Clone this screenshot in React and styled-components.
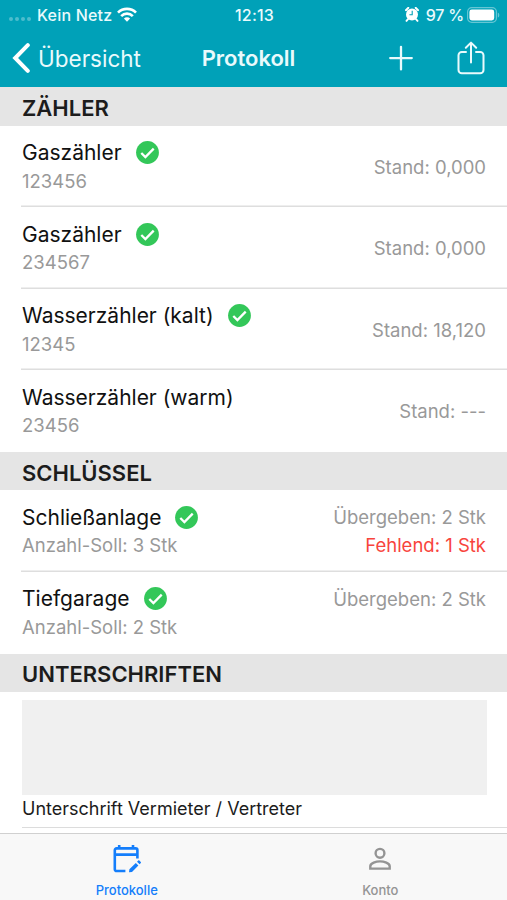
import styled, { createGlobalStyle } from "styled-components";

const meters = [
  { name: "Gaszähler", info: "123456", done: true, values: ["Stand: 0,000"] },
  { name: "Gaszähler", info: "234567", done: true, values: ["Stand: 0,000"] },
  { name: "Wasserzähler (kalt)", info: "12345", done: true, values: ["Stand: 18,120"] },
  { name: "Wasserzähler (warm)", info: "23456", done: false, values: ["Stand: ---"] },
];

const keys = [
  { name: "Schließanlage", info: "Anzahl-Soll: 3 Stk", done: true, values: ["Übergeben: 2 Stk"], missing: "Fehlend: 1 Stk" },
  { name: "Tiefgarage", info: "Anzahl-Soll: 2 Stk", done: true, values: ["Übergeben: 2 Stk"] },
];

export default function App() {
  return (
    <Screen>
      <GlobalStyle />
      <StatusBar>
        <StatusLeft>
          <SignalDots>
            <i />
            <i />
            <i />
            <i />
          </SignalDots>
          <Carrier>Kein Netz</Carrier>
          <WifiIcon />
        </StatusLeft>
        <Clock>12:13</Clock>
        <StatusRight>
          <AlarmIcon />
          <Percent>97 %</Percent>
          <BatteryIcon />
        </StatusRight>
      </StatusBar>
      <NavBar>
        <BackButton>
          <svg width="18" height="30" viewBox="0 0 18 30" fill="none" stroke="currentColor" strokeWidth="4">
            <path d="M15.8 2.2 3.2 15 15.8 27.8" strokeLinecap="round" strokeLinejoin="miter" />
          </svg>
          <span>Übersicht</span>
        </BackButton>
        <NavTitle>Protokoll</NavTitle>
        <NavActions>
          <ActionButton aria-label="Hinzufügen">
            <svg width="24" height="26" viewBox="0 0 24 26" stroke="currentColor" strokeWidth="2.3" strokeLinecap="round">
              <path d="M12 1.8v22.6M1.2 13.1h21.6" />
            </svg>
          </ActionButton>
          <ActionButton aria-label="Teilen">
            <svg width="28" height="34" viewBox="0 0 28 34" fill="none" stroke="currentColor" strokeWidth="2" strokeLinecap="round" strokeLinejoin="round">
              <path d="M9 11H4.8A3.3 3.3 0 0 0 1.5 14.3v14.6a3.3 3.3 0 0 0 3.3 3.3h18.4a3.3 3.3 0 0 0 3.3-3.3V14.3a3.3 3.3 0 0 0-3.3-3.3H19" />
              <path d="M14 21.5V1.8M8.8 6.8 14 1.6l5.2 5.2" />
            </svg>
          </ActionButton>
        </NavActions>
      </NavBar>

      <Content>
        <SectionHeader>ZÄHLER</SectionHeader>
        <List items={meters} />
        <SectionHeader>SCHLÜSSEL</SectionHeader>
        <List items={keys} top />
        <SectionHeader>UNTERSCHRIFTEN</SectionHeader>
        <Signature>
          <SignatureField />
          <SignatureLabel>Unterschrift Vermieter / Vertreter</SignatureLabel>
        </Signature>
      </Content>

      <TabBar>
        <Tab $active>
          <CalendarEditIcon />
          <TabLabel>Protokolle</TabLabel>
        </Tab>
        <Tab>
          <PersonIcon />
          <TabLabel>Konto</TabLabel>
        </Tab>
      </TabBar>
    </Screen>
  );
}

function List({ items, top }) {
  return (
    <Rows>
      {items.map((item) => (
        <Row key={item.info}>
          <div>
            <RowTitle>
              {item.name}
              {item.done && <CheckIcon />}
            </RowTitle>
            <RowInfo>{item.info}</RowInfo>
          </div>
          <RowValues $top={top}>
            {item.values.map((value) => (
              <RowValue key={value}>{value}</RowValue>
            ))}
            {item.missing && <RowValue $missing>{item.missing}</RowValue>}
          </RowValues>
        </Row>
      ))}
    </Rows>
  );
}

function CheckIcon() {
  return (
    <svg width="23" height="23" viewBox="0 0 23 23" fill="none">
      <circle cx="11.5" cy="11.5" r="11.4" fill="#33c759" />
      <path d="m5.3 12 4.1 4.1 8.3-8.5" stroke="#fff" strokeWidth="2.3" />
    </svg>
  );
}

function WifiIcon() {
  return (
    <svg width="20" height="15" viewBox="0 0 20 15" fill="none" stroke="#fff" strokeWidth="2.7">
      <path d="M1 5.6a12.8 12.8 0 0 1 18 0" />
      <path d="M4.2 9.1a8.2 8.2 0 0 1 11.6 0" />
      <path d="M10 14.8 6.9 11.6a4.4 4.4 0 0 1 6.2 0z" fill="#fff" stroke="none" />
    </svg>
  );
}

function AlarmIcon() {
  return (
    <svg width="14" height="15" viewBox="0 0 14 15">
      <circle cx="7" cy="7.4" r="6" fill="#fff" />
      <path d="m.9 3.2 2.5-2.4M13.1 3.2l-2.5-2.4M3 12.2l-1.5 1.7M11 12.2l1.5 1.7" stroke="#fff" strokeWidth="1.9" strokeLinecap="round" />
      <path d="M7.2 3.8v4H4.4" fill="none" stroke="#00a1b8" strokeWidth="1.1" />
    </svg>
  );
}

function BatteryIcon() {
  return (
    <svg width="33" height="16" viewBox="0 0 33 16">
      <rect x=".6" y=".6" width="28.8" height="14.8" rx="4.2" fill="none" stroke="#fff" strokeOpacity=".4" strokeWidth="1.2" />
      <rect x="2.4" y="2.6" width="24.8" height="10.8" rx="2.4" fill="#fff" />
      <path d="M30.8 5.4v5.2c2-.8 2-4.4 0-5.2z" fill="#fff" fillOpacity=".4" />
    </svg>
  );
}

function CalendarEditIcon() {
  return (
    <svg width="30" height="30" viewBox="0 0 30 30" fill="none" stroke="currentColor" strokeWidth="2.6">
      <path d="M13.4 27H4.6a1.8 1.8 0 0 1-1.8-1.8V6.2a1.8 1.8 0 0 1 1.8-1.8h19a1.8 1.8 0 0 1 1.8 1.8v8.4" />
      <path d="M2.8 10.6h22.6M7.2 1v4M21 1v4" />
      <path d="m17 28.3.4-3 6.4-6.4 2.6 2.6-6.4 6.4zM25 17.7l1.3-1.2c.3-.3.7-.3 1 0l1.5 1.5c.3.3.3.7 0 1l-1.2 1.3z" fill="currentColor" stroke="none" />
    </svg>
  );
}

function PersonIcon() {
  return (
    <svg width="30" height="30" viewBox="0 0 30 30" fill="none" stroke="currentColor" strokeWidth="2.4">
      <circle cx="15" cy="9.3" r="4.4" />
      <path d="M5.3 24.6v-2.4c0-3 5.8-4.8 9.7-4.8s9.7 1.8 9.7 4.8v2.4z" />
    </svg>
  );
}

const GlobalStyle = createGlobalStyle`
  * {
    box-sizing: border-box;
  }

  body {
    margin: 0;
    background: #fff;
    font-family: Inter, "Liberation Sans", sans-serif;
  }

  svg {
    display: block;
    flex: none;
  }
`;

const Screen = styled.div`
  display: flex;
  flex-direction: column;
  width: 507px;
  height: 900px;
  overflow: hidden;
  background: #fff;
`;

const StatusBar = styled.div`
  display: grid;
  grid-template-columns: 1fr auto 1fr;
  align-items: center;
  height: 29px;
  flex: none;
  padding: 0 7px 0 9px;
  background: #00a1b8;
  color: #e9fafc;
  font-size: 16px;
  font-weight: 500;
`;

const StatusLeft = styled.div`
  display: flex;
  align-items: center;
`;

const StatusRight = styled.div`
  display: flex;
  align-items: center;
  justify-content: flex-end;
`;

const SignalDots = styled.div`
  display: flex;
  gap: 2px;
  width: 28px;
  padding-top: 9px;

  i {
    width: 4px;
    height: 4px;
    border-radius: 50%;
    background: rgba(255, 255, 255, 0.3);
  }
`;

const Carrier = styled.span`
  width: 80px;
  letter-spacing: 0.2px;
  white-space: nowrap;
`;

const Clock = styled.span`
  letter-spacing: 0.2px;
`;

const Percent = styled.span`
  margin: 0 3px 0 7px;
  letter-spacing: -0.2px;
`;

const NavBar = styled.div`
  display: grid;
  grid-template-columns: 1fr auto 1fr;
  align-items: center;
  height: 58px;
  flex: none;
  padding: 0 22px 0 12px;
  background: #00a1b8;
  color: #e9fafc;
`;

const BackButton = styled.button`
  display: flex;
  align-items: center;
  gap: 8px;
  padding: 0;
  border: 0;
  background: none;
  color: inherit;
  font: 400 22.5px Inter, sans-serif;

  svg {
    color: #fff;
  }
`;

const NavTitle = styled.h1`
  margin: 0;
  font-size: 22px;
  font-weight: 600;
`;

const NavActions = styled.div`
  display: flex;
  align-items: center;
  justify-content: flex-end;
  gap: 44px;
`;

const ActionButton = styled.button`
  padding: 0;
  border: 0;
  background: none;
  color: inherit;
`;

const Content = styled.main`
  flex: 1;
  min-height: 0;
  overflow: hidden;
`;

const SectionHeader = styled.h2`
  display: flex;
  align-items: center;
  height: 38.5px;
  margin: 0;
  padding: 3px 22px 0;
  background: #e5e5e5;
  color: #1c1c1c;
  font-size: 22px;
  font-weight: 600;
`;

const Rows = styled.ul`
  margin: 0;
  padding: 0;
  list-style: none;
`;

const Row = styled.li`
  display: flex;
  justify-content: space-between;
  height: 81.6px;
  margin-left: 21px;
  padding: 13px 21px 0 1px;

  & + & {
    box-shadow: 0 -1.5px 0 #dedede;
  }
`;

const RowTitle = styled.div`
  display: flex;
  align-items: center;
  gap: 14px;
  height: 28px;
  color: #111;
  font-size: 21px;
`;

const RowInfo = styled.div`
  height: 28px;
  color: #999;
  font-size: 18.5px;
  line-height: 28px;
`;

const RowValues = styled.div`
  padding-top: ${(props) => (props.$top ? "0" : "14px")};
  text-align: right;
`;

const RowValue = styled.div`
  height: 28px;
  color: ${(props) => (props.$missing ? "#f8443c" : "#999")};
  font-size: 18.5px;
  line-height: 28px;
`;

const Signature = styled.div`
  height: 136px;
  margin-left: 22px;
  padding: 8px 20px 0 0;
  border-bottom: 1px solid #dcdcdc;
`;

const SignatureField = styled.div`
  height: 95px;
  background: #f0f0f0;
`;

const SignatureLabel = styled.div`
  color: #1c1c1c;
  font-size: 18px;
  line-height: 27px;
`;

const TabBar = styled.nav`
  display: flex;
  height: 67px;
  flex: none;
  border-top: 1.5px solid #d0d0d0;
  background: #f8f8f8;
`;

const Tab = styled.div`
  display: flex;
  flex: 1;
  flex-direction: column;
  align-items: center;
  padding-top: 10px;
  color: ${(props) => (props.$active ? "#147efb" : "#949494")};
`;

const TabLabel = styled.span`
  margin-top: 7px;
  font-size: 13px;
  font-weight: 500;
  line-height: 18px;
`;
